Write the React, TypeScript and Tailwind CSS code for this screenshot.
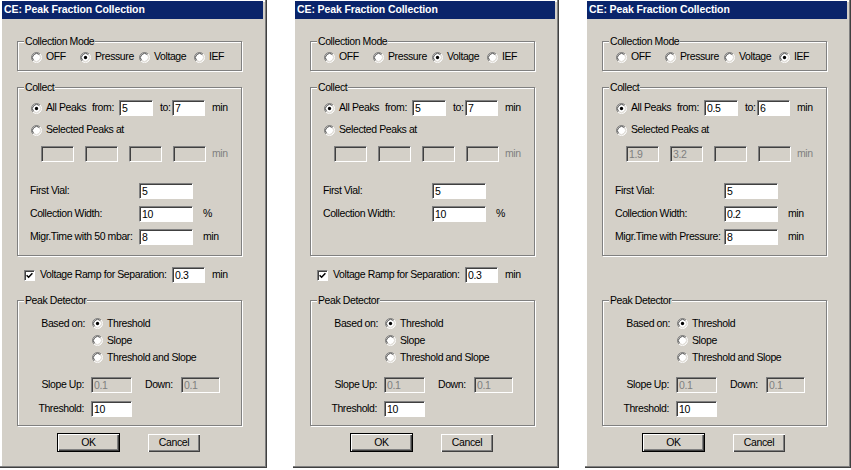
import clsx from "clsx";
import type { ReactNode } from "react";

type Mode = "OFF" | "Pressure" | "Voltage" | "IEF";

type PanelConfig = {
  mode: Mode;
  from: string;
  to: string;
  peaks: string[];
  widthValue: string;
  widthUnit: string;
  migr?: { label: string; value: string };
  ramp: boolean;
  className: string;
};

const panels: PanelConfig[] = [
  {
    mode: "Pressure",
    from: "5",
    to: "7",
    peaks: ["", "", "", ""],
    widthValue: "10",
    widthUnit: "%",
    migr: { label: "Migr.Time with 50 mbar:", value: "8" },
    ramp: true,
    className: "w-[267px]",
  },
  {
    mode: "Voltage",
    from: "5",
    to: "7",
    peaks: ["", "", "", ""],
    widthValue: "10",
    widthUnit: "%",
    ramp: true,
    className: "w-[266px]",
  },
  {
    mode: "IEF",
    from: "0.5",
    to: "6",
    peaks: ["1.9", "3.2", "", ""],
    widthValue: "0.2",
    widthUnit: "min",
    migr: { label: "Migr.Time with Pressure:", value: "8" },
    ramp: false,
    className: "w-[266px]",
  },
];

function Radio({ checked }: { checked?: boolean }) {
  return (
    <svg width="11" height="11" viewBox="0 0 12 12" className="shrink-0">
      <circle cx="6" cy="6" r="5" fill="#fff" />
      <path d="M2.11 9.89A5.5 5.5 0 0 1 9.89 2.11" fill="none" stroke="#808080" />
      <path d="M9.89 2.11A5.5 5.5 0 0 1 2.11 9.89" fill="none" stroke="#fff" />
      <path d="M2.82 9.18A4.5 4.5 0 0 1 9.18 2.82" fill="none" stroke="#404040" />
      <path d="M9.18 2.82A4.5 4.5 0 0 1 2.82 9.18" fill="none" stroke="#d4d0c8" />
      {checked && <circle cx="6" cy="6" r="1.8" fill="#000" />}
    </svg>
  );
}

function Check() {
  return (
    <span className="w-[11px] h-[11px] shrink-0 flex items-center justify-center bg-white border border-t-[#808080] border-l-[#808080] border-r-white border-b-white shadow-[inset_1px_1px_0_#404040]">
      <svg width="7" height="7" viewBox="0 0 7 7">
        <path d="M0.6 3.2 L2.6 5.2 L6.4 1.2" stroke="#000" strokeWidth="1.5" fill="none" />
      </svg>
    </span>
  );
}

function Field({ value = "", className, disabled }: { value?: string; className: string; disabled?: boolean }) {
  return (
    <input
      readOnly
      disabled={disabled}
      value={value}
      className={clsx(
        "h-[16px] pl-[2px] leading-[14px] border border-t-[#808080] border-l-[#808080] border-r-white border-b-white shadow-[inset_1px_1px_0_#404040] outline-none",
        disabled ? "bg-[#d4d0c8] text-[#808080]" : "bg-white text-black",
        className
      )}
    />
  );
}

function Group({ title, className, children }: { title: string; className?: string; children: ReactNode }) {
  return (
    <fieldset
      className={clsx(
        "ml-[17px] w-[225px] border border-[#808080] shadow-[1px_1px_0_#fff,inset_1px_1px_0_#fff]",
        className
      )}
    >
      <legend className="ml-[6px] px-[1px] leading-[12px] bg-[#d4d0c8]">{title}</legend>
      {children}
    </fieldset>
  );
}

function ModeOption({ label, checked, className }: { label: string; checked: boolean; className: string }) {
  return (
    <div className={clsx("flex items-center gap-[4px]", className)}>
      <Radio checked={checked} />
      <span>{label}</span>
    </div>
  );
}

function Window({ p }: { p: PanelConfig }) {
  return (
    <div
      className={clsx(
        "h-[468px] shrink-0 flex flex-col bg-[#d4d0c8] shadow-[inset_-1px_-1px_0_#404040,inset_-2px_-2px_0_#808080,inset_2px_2px_0_#fff]",
        p.className
      )}
    >
      <div className="mt-[1px] ml-[2px] mr-[4px] h-[18px] pl-[2px] flex items-center bg-[#0a246a] text-white font-bold tracking-[-0.1px]">
        CE: Peak Fraction Collection
      </div>

      <Group title="Collection Mode" className="mt-[16px]">
        <div className="pt-[2px] pb-[5px] pl-[13px] flex h-[23px] items-center">
          <ModeOption label="OFF" checked={p.mode === "OFF"} className="w-[49px]" />
          <ModeOption label="Pressure" checked={p.mode === "Pressure"} className="w-[59px]" />
          <ModeOption label="Voltage" checked={p.mode === "Voltage"} className="w-[55px]" />
          <ModeOption label="IEF" checked={p.mode === "IEF"} className="w-[40px]" />
        </div>
      </Group>

      <Group title="Collect" className="mt-[10px]">
        <div className="flex flex-col pb-[10px]">
          <div className="mt-[7px] h-[16px] pl-[13px] flex items-center">
            <Radio checked />
            <span className="ml-[4px] w-[46px]">All Peaks</span>
            <span className="w-[27px]">from:</span>
            <Field value={p.from} className="w-[34px]" />
            <span className="ml-[7px] w-[12px]">to:</span>
            <Field value={p.to} className="w-[33px]" />
            <span className="ml-[7px]">min</span>
          </div>
          <div className="mt-[6px] h-[16px] pl-[13px] flex items-center">
            <Radio />
            <span className="ml-[4px]">Selected Peaks at</span>
          </div>
          <div className="mt-[8px] h-[16px] pl-[23px] flex items-center gap-[11px]">
            {p.peaks.map((v, i) => (
              <Field key={i} value={v} disabled className="w-[33px]" />
            ))}
            <span className="-ml-[5px] text-[#808080]">min</span>
          </div>
          <div className="mt-[21px] h-[16px] pl-[12px] flex items-center">
            <span className="w-[109px]">First Vial:</span>
            <Field value="5" className="w-[54px]" />
          </div>
          <div className="mt-[7px] h-[16px] pl-[12px] flex items-center">
            <span className="w-[109px]">Collection Width:</span>
            <Field value={p.widthValue} className="w-[54px]" />
            <span className="ml-[10px]">{p.widthUnit}</span>
          </div>
          {p.migr ? (
            <div className="mt-[7px] h-[16px] pl-[12px] flex items-center">
              <span className="w-[109px]">{p.migr.label}</span>
              <Field value={p.migr.value} className="w-[54px]" />
              <span className="ml-[10px]">min</span>
            </div>
          ) : (
            <div className="h-[23px]" />
          )}
        </div>
      </Group>

      {p.ramp ? (
        <div className="mt-[11px] h-[16px] pl-[24px] flex items-center">
          <Check />
          <span className="ml-[5px] w-[132px]">Voltage Ramp for Separation:</span>
          <Field value="0.3" className="w-[33px]" />
          <span className="ml-[7px]">min</span>
        </div>
      ) : (
        <div className="mt-[11px] h-[16px]" />
      )}

      <Group title="Peak Detector" className="mt-[11px]">
        <div className="flex flex-col pb-[8px]">
          <div className="mt-[9px] h-[17px] flex items-center">
            <span className="w-[67px] text-right">Based on:</span>
            <span className="ml-[7px] flex items-center gap-[4px]">
              <Radio checked />
              Threshold
            </span>
          </div>
          <div className="h-[17px] pl-[74px] flex items-center gap-[4px]">
            <Radio />
            <span>Slope</span>
          </div>
          <div className="h-[17px] pl-[74px] flex items-center gap-[4px]">
            <Radio />
            <span>Threshold and Slope</span>
          </div>
          <div className="mt-[11px] h-[16px] flex items-center">
            <span className="w-[66px] text-right">Slope Up:</span>
            <Field value="0.1" disabled className="ml-[7px] w-[41px]" />
            <span className="ml-[13px] w-[36px]">Down:</span>
            <Field value="0.1" disabled className="w-[39px]" />
          </div>
          <div className="mt-[8px] h-[16px] flex items-center">
            <span className="w-[66px] text-right">Threshold:</span>
            <Field value="10" className="ml-[7px] w-[41px]" />
          </div>
        </div>
      </Group>

      <div className="mt-[7px] pl-[57px] flex items-center">
        <button className="w-[63px] h-[19px] border border-black shadow-[inset_1px_1px_0_#fff,inset_-1px_-1px_0_#404040,inset_-2px_-2px_0_#808080]">
          OK
        </button>
        <button className="ml-[28px] w-[52px] h-[18px] shadow-[inset_1px_1px_0_#fff,inset_-1px_-1px_0_#404040,inset_-2px_-2px_0_#808080]">
          Cancel
        </button>
      </div>
    </div>
  );
}

export default function App() {
  return (
    <div className="w-[851px] h-[470px] bg-white flex gap-[26px] font-['Liberation_Sans',Arial,sans-serif] text-[10.5px] tracking-[-0.4px] text-black">
      {panels.map((p, i) => (
        <Window key={i} p={p} />
      ))}
    </div>
  );
}
